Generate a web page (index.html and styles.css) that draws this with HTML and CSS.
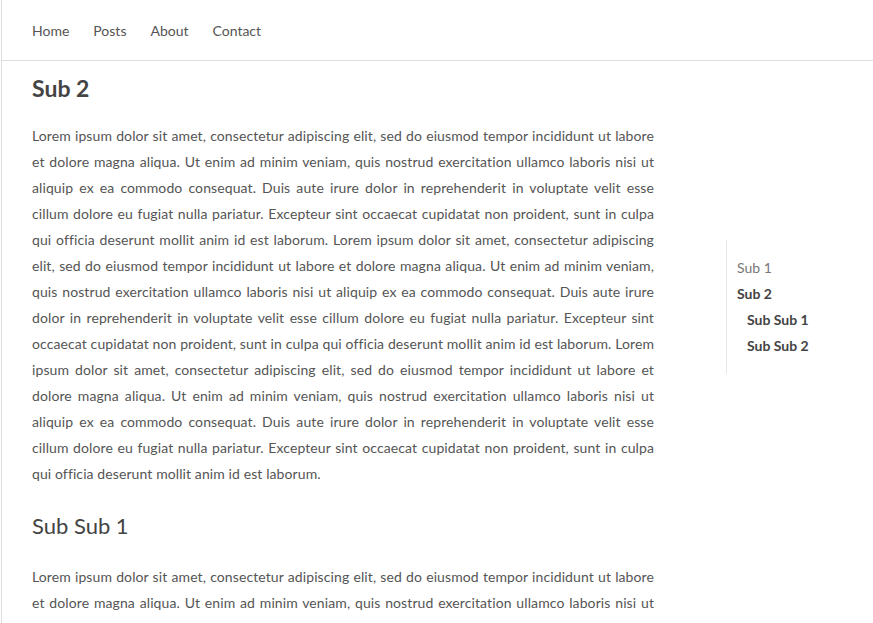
FILE: index.html
```html
<!DOCTYPE html>
<html lang="en">
<head>
    <meta charset="UTF-8">
    <meta name="viewport" content="width=device-width, initial-scale=1.0">
    <title>Sub 2</title>
    <link rel="stylesheet" href="styles.css">
</head>
<body>
    <div class="page">
        <header class="site-header">
            <nav class="nav">
                <a href="#">Home</a>
                <a href="#">Posts</a>
                <a href="#">About</a>
                <a href="#">Contact</a>
            </nav>
        </header>

        <div class="layout">
            <main class="content">
                <h1 id="sub-2">Sub 2</h1>
                <p>Lorem ipsum dolor sit amet, consectetur adipiscing elit, sed do eiusmod tempor incididunt ut labore et dolore magna aliqua. Ut enim ad minim veniam, quis nostrud exercitation ullamco laboris nisi ut aliquip ex ea commodo consequat. Duis aute irure dolor in reprehenderit in voluptate velit esse cillum dolore eu fugiat nulla pariatur. Excepteur sint occaecat cupidatat non proident, sunt in culpa qui officia deserunt mollit anim id est laborum. Lorem ipsum dolor sit amet, consectetur adipiscing elit, sed do eiusmod tempor incididunt ut labore et dolore magna aliqua. Ut enim ad minim veniam, quis nostrud exercitation ullamco laboris nisi ut aliquip ex ea commodo consequat. Duis aute irure dolor in reprehenderit in voluptate velit esse cillum dolore eu fugiat nulla pariatur. Excepteur sint occaecat cupidatat non proident, sunt in culpa qui officia deserunt mollit anim id est laborum. Lorem ipsum dolor sit amet, consectetur adipiscing elit, sed do eiusmod tempor incididunt ut labore et dolore magna aliqua. Ut enim ad minim veniam, quis nostrud exercitation ullamco laboris nisi ut aliquip ex ea commodo consequat. Duis aute irure dolor in reprehenderit in voluptate velit esse cillum dolore eu fugiat nulla pariatur. Excepteur sint occaecat cupidatat non proident, sunt in culpa qui officia deserunt mollit anim id est laborum.</p>

                <h2 id="sub-sub-1">Sub Sub 1</h2>
                <p>Lorem ipsum dolor sit amet, consectetur adipiscing elit, sed do eiusmod tempor incididunt ut labore et dolore magna aliqua. Ut enim ad minim veniam, quis nostrud exercitation ullamco laboris nisi ut aliquip ex ea commodo consequat. Duis aute irure dolor in reprehenderit in voluptate velit esse cillum dolore eu fugiat nulla pariatur.</p>
            </main>

            <aside class="toc">
                <ul>
                    <li><a href="#">Sub 1</a></li>
                    <li class="active"><a href="#sub-2">Sub 2</a>
                        <ul>
                            <li><a href="#sub-sub-1">Sub Sub 1</a></li>
                            <li><a href="#">Sub Sub 2</a></li>
                        </ul>
                    </li>
                </ul>
            </aside>
        </div>
    </div>
</body>
</html>
```

FILE: styles.css
```css
* {
    margin: 0;
    padding: 0;
    box-sizing: border-box;
}

html, body {
    height: 100%;
    overflow: hidden;
}

body {
    font-family: 'Segoe UI', Lato, 'Open Sans', sans-serif;
    font-size: 14px;
    color: #555;
    background: #fff;
}

a {
    color: inherit;
    text-decoration: none;
}

.page {
    min-height: 100%;
    border-left: 1px solid #ddd;
    margin-left: 1px;
}

.site-header {
    height: 61px;
    border-bottom: 1px solid #ddd;
    display: flex;
    align-items: center;
    padding: 0 30px;
}

.nav {
    display: flex;
    gap: 24px;
    color: #555;
}

.layout {
    display: flex;
    padding-left: 30px;
}

.content {
    width: 622px;
    flex-shrink: 0;
}

.content h1 {
    font-size: 23px;
    font-weight: 700;
    line-height: 28px;
    color: #444;
    margin-top: 13px;
}

.content h2 {
    font-size: 22px;
    font-weight: 400;
    line-height: 28px;
    color: #444;
    margin-top: 25px;
}

.content p {
    line-height: 26px;
    text-align: justify;
    letter-spacing: 0.1px;
    margin-top: 21px;
}

.content h2 + p {
    margin-top: 24px;
}

.toc {
    margin-left: 72px;
    margin-top: 179px;
    align-self: flex-start;
    border-left: 1px solid #e6e6e6;
    padding: 15px 0 15px 10px;
}

.toc ul {
    list-style: none;
}

.toc li {
    line-height: 26px;
    color: #777;
}

.toc li.active > a,
.toc li li {
    font-weight: 700;
    color: #444;
}

.toc li ul {
    padding-left: 10px;
}
```
